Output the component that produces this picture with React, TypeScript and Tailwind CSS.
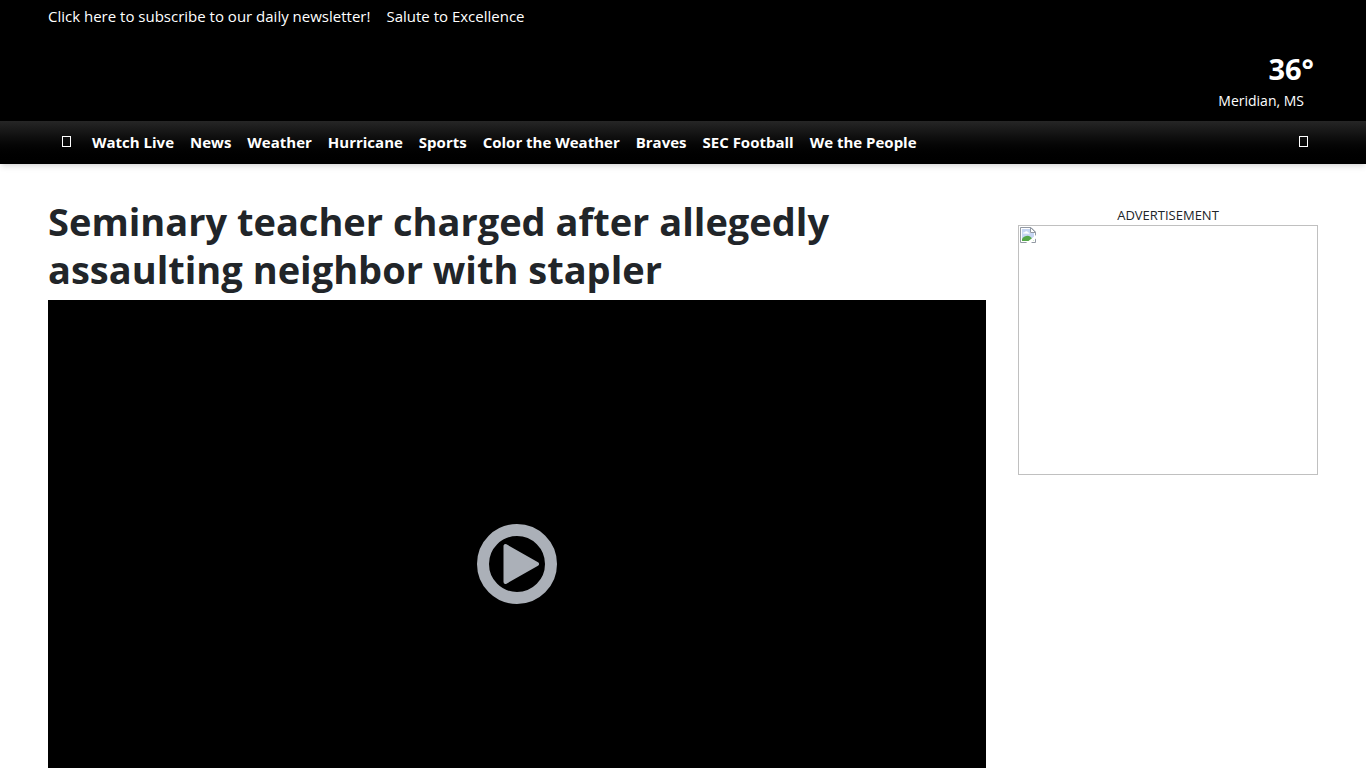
const topLinks = ["Click here to subscribe to our daily newsletter!", "Salute to Excellence"];

const navLinks = [
  "Watch Live",
  "News",
  "Weather",
  "Hurricane",
  "Sports",
  "Color the Weather",
  "Braves",
  "SEC Football",
  "We the People",
];

function GlyphBox() {
  return (
    <svg className="w-[9px] h-[11px]" viewBox="0 0 9 11" fill="none" stroke="white" aria-hidden="true">
      <rect x="0.5" y="0.5" width="8" height="10" />
    </svg>
  );
}

function PlayIcon() {
  return (
    <svg className="w-20 h-20" viewBox="0 0 80 80" aria-hidden="true">
      <circle cx="40" cy="40" r="34" fill="none" stroke="#abb0b8" strokeWidth="12" />
      <path d="M28.5 22v36L60 40Z" fill="#abb0b8" stroke="#abb0b8" strokeWidth="4" strokeLinejoin="round" />
    </svg>
  );
}

function BrokenImage() {
  return (
    <svg className="w-4 h-4" viewBox="0 0 16 16" aria-hidden="true">
      <path d="M0.5 0.5H11L15.5 5V15.5H0.5Z" fill="#fff" />
      <path d="M2 2H10V6H14V14H2Z" fill="#c6d6f3" />
      <path d="M3 6.5c0-1 1-1.5 1.8-1.2C5.3 4 7.5 4 8 5.5c1 0 1.5 .5 1.5 1.2Z" fill="#fff" />
      <path d="M2 14v-2C4 9 8 8 10 9.500L14 13V14Z" fill="#55a849" />
      <path d="M0.5 0.5H11L15.5 5V15.5H0.5Z" fill="none" stroke="#9299a3" />
      <path d="M10.5 0.5V5.5H15.5Z" fill="#fff" stroke="#9299a3" />
      <path d="M6 16 16 8V11.500L11 16Z" fill="#fff" />
    </svg>
  );
}

export default function App() {
  return (
    <div className="min-h-screen bg-white text-[#212529] font-['Open_Sans','Noto_Sans',sans-serif]">
      <header className="bg-black text-white">
        <div className="flex gap-4 px-12 pt-1 text-[15px] leading-6">
          {topLinks.map((link) => (
            <a key={link} href="#" className="hover:underline">{link}</a>
          ))}
        </div>
        <div className="flex justify-end px-12 pt-[21px] pb-2">
          <a href="#" className="flex flex-col items-end">
            <span className="pr-1 text-[29px] leading-10 font-bold">36°</span>
            <span className="pr-[14px] text-[14px] leading-6">Meridian, MS</span>
          </a>
        </div>
      </header>

      <nav className="flex h-[43px] items-center justify-between bg-linear-to-b from-[#262626] to-black px-12 pb-[2px] text-white shadow-md">
        <div className="flex items-center">
          <a href="#" aria-label="Home" className="px-[14px]"><GlyphBox /></a>
          <ul className="flex gap-4 pl-[7px] text-[15px] leading-6 font-bold">
            {navLinks.map((link) => (
              <li key={link}><a href="#" className="hover:underline">{link}</a></li>
            ))}
          </ul>
        </div>
        <button type="button" aria-label="Search" className="px-[10px] py-2"><GlyphBox /></button>
      </nav>

      <main className="grid grid-cols-[minmax(0,1fr)_300px] gap-8 px-12 pt-[33px]">
        <article>
          <h1 className="mb-[7px] text-[38px] leading-12 font-bold">
            Seminary teacher charged after allegedly assaulting neighbor with stapler
          </h1>
          <button type="button" aria-label="Play video" className="flex aspect-video w-full items-center justify-center bg-black">
            <PlayIcon />
          </button>
        </article>
        <aside className="pt-[9px]">
          <p className="text-center text-[13px] leading-[19px]">ADVERTISEMENT</p>
          <a href="#" aria-label="Advertisement" className="block h-[250px] border border-[#c0c0c0] p-px">
            <BrokenImage />
          </a>
        </aside>
      </main>
    </div>
  );
}
